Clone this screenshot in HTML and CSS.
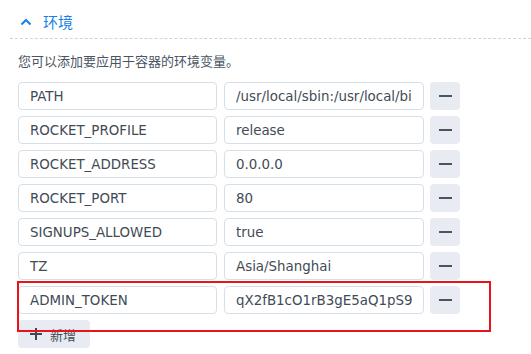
FILE: index.html
```html
<!DOCTYPE html>
<html lang="zh-CN">
<head>
  <meta charset="UTF-8">
  <meta name="viewport" content="width=device-width, initial-scale=1.0">
  <title>环境</title>
  <link rel="stylesheet" href="styles.css">
</head>
<body>
  <div class="section">
    <div class="section-head">
      <svg class="chevron" width="12" height="8" viewBox="0 0 12 8"><path d="M1.5 6.5 L6 2 L10.5 6.5" fill="none" stroke="#1a7fe6" stroke-width="2"/></svg>
      <span class="section-title">环境</span>
    </div>
    <div class="section-body">
      <p class="desc">您可以添加要应用于容器的环境变量。</p>
      <div class="env-list">
        <div class="env-row">
          <input class="field" value="PATH">
          <input class="field" value="/usr/local/sbin:/usr/local/bin:/usr/sbin:/usr/bin:/sbin:/bin">
          <button class="remove"><span class="minus"></span></button>
        </div>
        <div class="env-row">
          <input class="field" value="ROCKET_PROFILE">
          <input class="field" value="release">
          <button class="remove"><span class="minus"></span></button>
        </div>
        <div class="env-row">
          <input class="field" value="ROCKET_ADDRESS">
          <input class="field" value="0.0.0.0">
          <button class="remove"><span class="minus"></span></button>
        </div>
        <div class="env-row">
          <input class="field" value="ROCKET_PORT">
          <input class="field" value="80">
          <button class="remove"><span class="minus"></span></button>
        </div>
        <div class="env-row">
          <input class="field" value="SIGNUPS_ALLOWED">
          <input class="field" value="true">
          <button class="remove"><span class="minus"></span></button>
        </div>
        <div class="env-row">
          <input class="field" value="TZ">
          <input class="field" value="Asia/Shanghai">
          <button class="remove"><span class="minus"></span></button>
        </div>
        <div class="env-row">
          <input class="field" value="ADMIN_TOKEN">
          <input class="field" value="qX2fB1cO1rB3gE5aQ1pS9c7dK2">
          <button class="remove"><span class="minus"></span></button>
        </div>
      </div>
      <button class="add">
        <svg width="12" height="12" viewBox="0 0 12 12"><path d="M6 0 V12 M0 6 H12" stroke="#3f4853" stroke-width="2"/></svg>
        <span>新增</span>
      </button>
      <div class="highlight"></div>
    </div>
  </div>
</body>
</html>
```

FILE: styles.css
```css
body {
  margin: 0;
  background: #fff;
  font-family: "DejaVu Sans", "Noto Sans CJK SC", sans-serif;
  color: #414b55;
}

.section-head {
  display: flex;
  align-items: center;
  gap: 11px;
  height: 33px;
  padding: 5px 0 0 10px;
  margin-left: 10px;
  border-bottom: 1px dashed #d0d4d9;
}

.chevron {
  display: block;
}

.section-title {
  font-size: 15px;
  color: #1a7fe6;
}

.section-body {
  position: relative;
  padding: 14px 0 0 18px;
}

.desc {
  margin: 0 0 11px;
  font-size: 13px;
  line-height: 18px;
  color: #4a5563;
}

.env-list {
  display: flex;
  flex-direction: column;
  gap: 6px;
}

.env-row {
  display: grid;
  grid-template-columns: 199px 200px 30px;
  column-gap: 7px;
}

.env-row .remove {
  margin-left: -1px;
}

.field {
  box-sizing: border-box;
  height: 28px;
  padding: 0 11px;
  border: 1px solid #d7dfe8;
  border-radius: 4px;
  font-family: inherit;
  font-size: 13.4px;
  color: #414b55;
  background: #fff;
  outline: none;
}

.remove {
  display: flex;
  align-items: center;
  justify-content: center;
  height: 28px;
  width: 30px;
  padding: 0;
  border: none;
  border-radius: 4px;
  background: #e8ecf2;
}

.minus {
  display: block;
  width: 13px;
  height: 2px;
  background: #4a5563;
}

.add {
  display: flex;
  align-items: center;
  gap: 8px;
  margin-top: 6px;
  height: 28px;
  width: 72px;
  padding: 0 0 0 12px;
  border: none;
  border-radius: 4px;
  background: #e8ecf2;
  font-family: inherit;
  font-size: 13px;
  color: #414b55;
}

.highlight {
  position: absolute;
  left: 17px;
  top: 242px;
  width: 470px;
  height: 47px;
  border: 2px solid #e8141c;
}
```
